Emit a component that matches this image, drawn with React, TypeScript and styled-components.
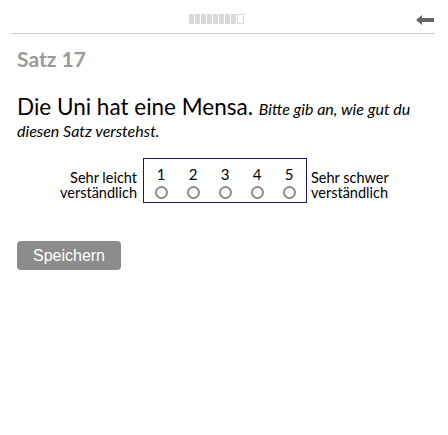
import React from "react";
import styled, { createGlobalStyle } from "styled-components";

const GlobalStyle = createGlobalStyle`
  html, body {
    margin: 0;
    padding: 0;
    background: #ffffff;
  }
  body {
    font-family: Lato, "Open Sans", sans-serif;
    color: #000000;
  }
`;

const Page = styled.div`
  width: 448px;
  height: 435px;
  padding: 0 13px 0 11px;
  box-sizing: border-box;
`;

const TopBar = styled.div`
  height: 34px;
  border-bottom: 1px solid #cccccc;
  box-sizing: border-box;
  display: flex;
  align-items: flex-start;
  justify-content: center;
  position: relative;
`;

const Progress = styled.div`
  display: flex;
  gap: 1px;
  margin-left: -13px;
  margin-top: 14px;
`;

const Segment = styled.div<{ $done: boolean }>`
  width: ${(p) => (p.$done ? "5px" : "7px")};
  height: 10px;
  box-sizing: border-box;
  background: ${(p) => (p.$done ? "#d9d9d9" : "#ffffff")};
  border: 1px solid #d9d9d9;
`;

const BackButton = styled.button`
  position: absolute;
  right: 1px;
  top: 15px;
  background: none;
  border: none;
  padding: 0;
  cursor: pointer;
  display: flex;
`;

const Content = styled.div`
  padding: 0 6px;
`;

const Title = styled.h2`
  margin: 12px 0 0;
  font-size: 21px;
  font-weight: 700;
  color: #999999;
  line-height: 26px;
`;

const Sentence = styled.p`
  margin: 24px 0 0;
  line-height: 22px;
  max-width: 396px;
`;

const Main = styled.span`
  font-size: 22.5px;
`;

const Hint = styled.em`
  font-size: 16px;
  font-style: italic;
  font-weight: 400;
`;

const ScaleRow = styled.div`
  display: flex;
  align-items: flex-end;
  margin-top: 16px;
`;

const Label = styled.div<{ $align: "left" | "right" }>`
  font-size: 14.5px;
  line-height: 14.5px;
  text-align: ${(p) => p.$align};
  width: ${(p) => (p.$align === "right" ? "120px" : "auto")};
  padding: 0 ${(p) => (p.$align === "right" ? "6px" : "0")} 3px
    ${(p) => (p.$align === "left" ? "4px" : "0")};
`;

const ScaleBox = styled.div`
  display: flex;
  border: 1px solid #1b1b5e;
  padding: 6px 1px 0 1px;
  height: 45px;
  box-sizing: border-box;
`;

const Option = styled.label`
  width: 32px;
  display: flex;
  flex-direction: column;
  align-items: center;
  font-size: 15px;
  line-height: 18px;
`;

const Radio = styled.span`
  width: 13px;
  height: 13px;
  margin-top: 3px;
  border: 2px solid #8a8a96;
  border-radius: 50%;
  box-sizing: border-box;
`;

const SaveButton = styled.button`
  margin-top: 38px;
  width: 104px;
  height: 29px;
  background: #8c8c8c;
  color: #ffffff;
  border: none;
  border-radius: 4px;
  font-family: "Liberation Sans", Arial, sans-serif;
  font-size: 16px;
  cursor: pointer;
  padding: 0;
`;

export default function App() {
  const steps = Array.from({ length: 8 }, (_, i) => i);
  return (
    <Page>
      <GlobalStyle />
      <TopBar>
        <Progress>
          {steps.map((i) => (
            <Segment key={i} $done />
          ))}
          <Segment $done={false} />
        </Progress>
        <BackButton aria-label="zurück">
          <svg width="18" height="10" viewBox="0 0 18 10">
            <path d="M0 5 L6 0 L6 3 L18 3 L18 7 L6 7 L6 10 Z" fill="#666666" />
          </svg>
        </BackButton>
      </TopBar>
      <Content>
        <Title>Satz 17</Title>
        <Sentence>
          <Main>Die Uni hat eine Mensa. </Main>
          <Hint>Bitte gib an, wie gut du diesen Satz verstehst.</Hint>
        </Sentence>
        <ScaleRow>
          <Label $align="right">
            Sehr leicht
            <br />
            verständlich
          </Label>
          <ScaleBox>
            {[1, 2, 3, 4, 5].map((n) => (
              <Option key={n}>
                {n}
                <Radio />
              </Option>
            ))}
          </ScaleBox>
          <Label $align="left">
            Sehr schwer
            <br />
            verständlich
          </Label>
        </ScaleRow>
        <SaveButton>Speichern</SaveButton>
      </Content>
    </Page>
  );
}
